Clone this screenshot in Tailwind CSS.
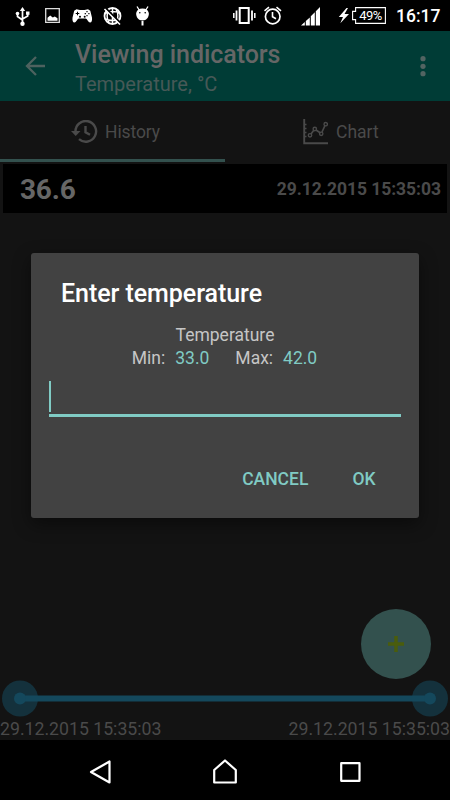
<!DOCTYPE html>
<html lang="en">
<head>
    <meta charset="UTF-8">
    <meta name="viewport" content="width=device-width, initial-scale=1.0">
    <title>Viewing indicators</title>
    <script src="https://cdn.jsdelivr.net/npm/@tailwindcss/browser@4"></script>
</head>
<body class="bg-black">
<div class="relative flex flex-col w-[450px] h-[800px] overflow-hidden bg-[#131313] font-[Roboto,sans-serif] text-[17.5px] leading-5">

    <!-- Status bar -->
    <div class="flex items-center h-[31px] bg-black text-white shrink-0">
        <svg class="w-[150px] h-[31px]" viewBox="0 0 150 31" fill="none" stroke="#fff">
            <!-- usb -->
            <path d="M22.500 9v15M17.500 13v3.500l5 3.500M27.700 12.500v3.500l-5.200 3" stroke-width="1.700"/>
            <path d="M19.800 11l2.700-4 2.700 4z" fill="#fff" stroke="none"/>
            <circle cx="22.500" cy="23.700" r="2.200" fill="#fff" stroke="none"/>
            <circle cx="17.500" cy="13.500" r="1.800" fill="#fff" stroke="none"/>
            <path d="M26 11.500h3.500v3.300h-3.500z" fill="#fff" stroke="none"/>
            <!-- picture -->
            <path d="M45.700 8.700h13.600v13.600h-13.600z" stroke="#ddd" stroke-width="1.300"/>
            <path d="M47.500 20.700v-3l2.700-2.300 2.600 2.200 2-1 2.700 1.700v2.400z" fill="#fff" stroke="none"/>
            <!-- gamepad -->
            <path d="M76.500 9.200l3.500.9h4.500l3.500-.9 2.300 1.500 1.700 7c.3 3-.4 4.800-1.900 4.800-2 0-2.500-3.500-4.600-4h-6.500c-2.100.5-2.600 4-4.600 4-1.500 0-2.200-1.800-1.900-4.800l1.700-7z" fill="#fff" stroke="none"/>
            <path d="M77.500 11.700v3.600M75.700 13.500h3.600" stroke="#000" stroke-width="1"/>
            <path d="M87 11v1.200M87 15v1.200M84.700 13.600h1.200M88.300 13.600h1.200" stroke="#000" stroke-width="1.200"/>
            <circle cx="80" cy="16.800" r="1" fill="#000" stroke="none"/>
            <circle cx="84.700" cy="16.800" r="1" fill="#000" stroke="none"/>
            <!-- globe off -->
            <circle cx="112.500" cy="16" r="8" stroke-width="1.800"/>
            <path d="M105 13c5-2 10-2 15 0M105 19c5 2 10 2 15 0M112.500 8v16M109 9c-2.500 4-2.500 10 0 14M116 9c2.500 4 2.500 10 0 14" stroke-width="1.500"/>
            <path d="M105.500 8l15 15" stroke="#000" stroke-width="2"/>
            <path d="M104.500 9l15.500 15.500" stroke-width="1.600"/>
            <!-- android head -->
            <path d="M136.200 13c.7-3.200 2.800-4.500 6.300-4.500s5.600 1.300 6.300 4.500c.4 4-2.300 7.500-6.300 7.500s-6.700-3.500-6.300-7.500z" fill="#fff" stroke="none"/>
            <path d="M137 6.500l2.200 3.500M148 6.500l-2.200 3.500" stroke-width="1.300"/>
            <path d="M142.500 21v4.500" stroke-width="2"/>
            <circle cx="139.800" cy="12.800" r=".8" fill="#000" stroke="none"/>
            <circle cx="145.200" cy="12.800" r=".8" fill="#000" stroke="none"/>
        </svg>
        <svg class="ml-[80px] w-[122px] h-[31px]" viewBox="230 0 122 31" fill="none" stroke="#fff">
            <!-- vibrate -->
            <path d="M239.700 8h9v15h-9z" stroke-width="2"/>
            <path d="M236.500 10.500v10M252 10.500v10" stroke-width="1.800"/>
            <path d="M233.800 13v5M254.800 13v5" stroke-width="1.500"/>
            <!-- alarm -->
            <circle cx="272.700" cy="16.500" r="7.300" stroke-width="1.700"/>
            <path d="M272.500 12v4.800l3.500 2M264.500 10.800l4.500-3.600M281 10.800l-4.500-3.600" stroke-width="1.600"/>
            <!-- signal -->
            <path d="M301 25.500l3.800-3.500v3.500zM305.800 21l4-3.500v8h-4zM310.800 16.300l4-4v13.200h-4zM315.800 11.300l4.200-4.300v18.500h-4.200z" fill="#fff" stroke="none"/>
            <!-- charging -->
            <path d="M346.500 8l-7.700 9h4.200l-2.700 6.300 8.700-9.300h-4.500l3.500-6z" fill="#fff" stroke="none"/>
        </svg>
        <div class="relative w-[34px] h-[17px]">
            <svg class="absolute inset-0 w-[34px] h-[17px]" viewBox="0 0 34 17" fill="none" stroke="#fff" stroke-width="1.100">
                <path d="M3.600.6h29.800v15.800h-29.800v-3.800h-3v-8.200h3z"/>
            </svg>
            <span class="absolute left-[4px] top-0 w-[29px] text-center text-[13px] leading-[18px] tracking-[-0.6px]">49%</span>
        </div>
        <span class="ml-[10px] pt-px text-[17.5px] font-medium">16:17</span>
    </div>

    <!-- Toolbar -->
    <header class="flex items-start h-[70px] bg-[#003c36] shrink-0">
        <svg class="mt-[25px] ml-[25px] w-5 h-5" viewBox="0 0 20 20" fill="none" stroke="#4d625f" stroke-width="2.300">
            <path d="M20 10H2M11 1L2 10l9 9"/>
        </svg>
        <div class="ml-[30px] grow pt-[9px]">
            <h1 class="text-[25px] leading-[29px] font-medium tracking-[-0.05px] text-[#666]">Viewing indicators</h1>
            <p class="text-[20px] leading-[30px] text-[#475957]">Temperature, °C</p>
        </div>
        <svg class="mt-[25px] mr-[24.5px] w-[6px] h-[21px]" viewBox="0 0 6 21" fill="#526462">
            <circle cx="3" cy="2.700" r="2.600"/>
            <circle cx="3" cy="10.300" r="2.600"/>
            <circle cx="3" cy="17.700" r="2.600"/>
        </svg>
    </header>

    <!-- Tabs -->
    <nav class="grid grid-cols-2 h-[61px] text-[#4a4a4a] shrink-0">
        <div class="flex items-center pl-[71px] gap-[7px] pt-[3px] border-b-[3px] border-[#33514e]">
            <svg class="w-[27px] h-6" viewBox="0 0 27 24" fill="none" stroke="#4a4a4a" stroke-width="2.400">
                <path d="M4.500 11.800a10.300 10.300 0 1 1 3.500 7.300M14.500 6v6.200l4.500 2.600"/>
                <path d="M0 11h9.500l-4.800 5z" fill="#4a4a4a" stroke="none"/>
            </svg>
            <span class="tracking-[-0.1px]">History</span>
        </div>
        <div class="flex items-center pl-[78px] gap-[8px]">
            <svg class="w-[25px] h-[26px]" viewBox="0 0 25 26" fill="none" stroke="#4a4a4a" stroke-width="1.400">
                <path d="M1.200 0v24.200H25" stroke-width="1.900"/>
                <path d="M2 5.500h1.500M2 9.500h1.500M2 13.500h1.500M2 17.500h1.500"/>
                <path d="M8 15l3-4M13 11l4.500 3M19 13l3-6.500" stroke-width="1.700"/>
                <circle cx="7" cy="16.300" r="1.700"/>
                <circle cx="11.800" cy="10" r="1.700"/>
                <circle cx="18.200" cy="14.800" r="1.700"/>
                <circle cx="22.700" cy="5.200" r="1.700"/>
            </svg>
            <span>Chart</span>
        </div>
    </nav>

    <!-- History list -->
    <main class="grow pt-[2px] px-[3px]">
        <div class="flex items-center justify-between h-[49px] pl-[17px] pr-[6px] bg-black font-bold">
            <span class="pt-[3px] text-[28px] leading-8 tracking-[-0.2px] text-[#666]">36.6</span>
            <span class="tracking-[-0.04px] text-[#4a4a4a]">29.12.2015 15:35:03</span>
        </div>
    </main>

    <!-- Date range -->
    <div class="shrink-0">
        <svg class="block w-[450px] h-[38px]" viewBox="0 0 450 38">
            <circle cx="20" cy="18.500" r="18" fill="#14313c"/>
            <circle cx="430" cy="18.500" r="18" fill="#14313c"/>
            <path d="M20 18.500h410" stroke="#14485c" stroke-width="6"/>
            <circle cx="20" cy="18.500" r="6" fill="#14485c"/>
            <circle cx="430" cy="18.500" r="6" fill="#14485c"/>
        </svg>
        <div class="flex justify-between h-[22px] pt-px text-[17.700px] text-[#4a4a4a]">
            <span>29.12.2015 15:35:03</span>
            <span>29.12.2015 15:35:03</span>
        </div>
    </div>

    <!-- Navigation bar -->
    <footer class="h-[60px] bg-black shrink-0">
        <svg class="w-[450px] h-[60px]" viewBox="0 0 450 60" fill="none" stroke="#fff" stroke-width="2.200" stroke-linejoin="round">
            <path d="M109.500 21.500v21l-18.500-10.500z"/>
            <path d="M214.200 30l10.800-9.500 10.800 9.500v12.500h-21.600z"/>
            <path d="M341.200 23.200h18.300v17.600h-18.300z"/>
        </svg>
    </footer>

    <!-- Add button -->
    <button class="absolute left-[361px] top-[609px] size-[70px] rounded-full bg-[#33514e] flex items-center justify-center">
        <svg class="size-4" viewBox="0 0 16 16" stroke="#4a5c0c" stroke-width="3.500">
            <path d="M8 0v16M0 8h16"/>
        </svg>
    </button>

    <!-- Dialog -->
    <div class="absolute left-[31px] top-[253px] w-[388px] h-[265px] rounded-[3px] bg-[#424242] shadow-[0_6px_18px_rgba(0,0,0,0.45)] flex flex-col">
        <h2 class="mt-[26px] ml-[30px] text-[25px] leading-[30px] font-medium tracking-[-0.05px] text-white">Enter temperature</h2>
        <div class="mt-[14px] text-center leading-6 text-[#c6c6c6]">
            <p>Temperature</p>
            <p class="flex justify-center -mt-px pr-px">
                <span>Min:</span>
                <span class="ml-[10px] text-[#80cbc4]">33.0</span>
                <span class="ml-[26px]">Max:</span>
                <span class="ml-[10px] text-[#80cbc4]">42.0</span>
            </p>
        </div>
        <div class="mt-[11px] mx-[18px] h-[36px] border-b-[3px] border-[#80cbc4]">
            <div class="w-[2px] h-[31px] bg-[#80cbc4]"></div>
        </div>
        <div class="flex justify-end gap-[44px] mt-[52px] pr-[43.5px] font-medium text-[#80cbc4]">
            <button>CANCEL</button>
            <button>OK</button>
        </div>
    </div>
</div>
</body>
</html>
